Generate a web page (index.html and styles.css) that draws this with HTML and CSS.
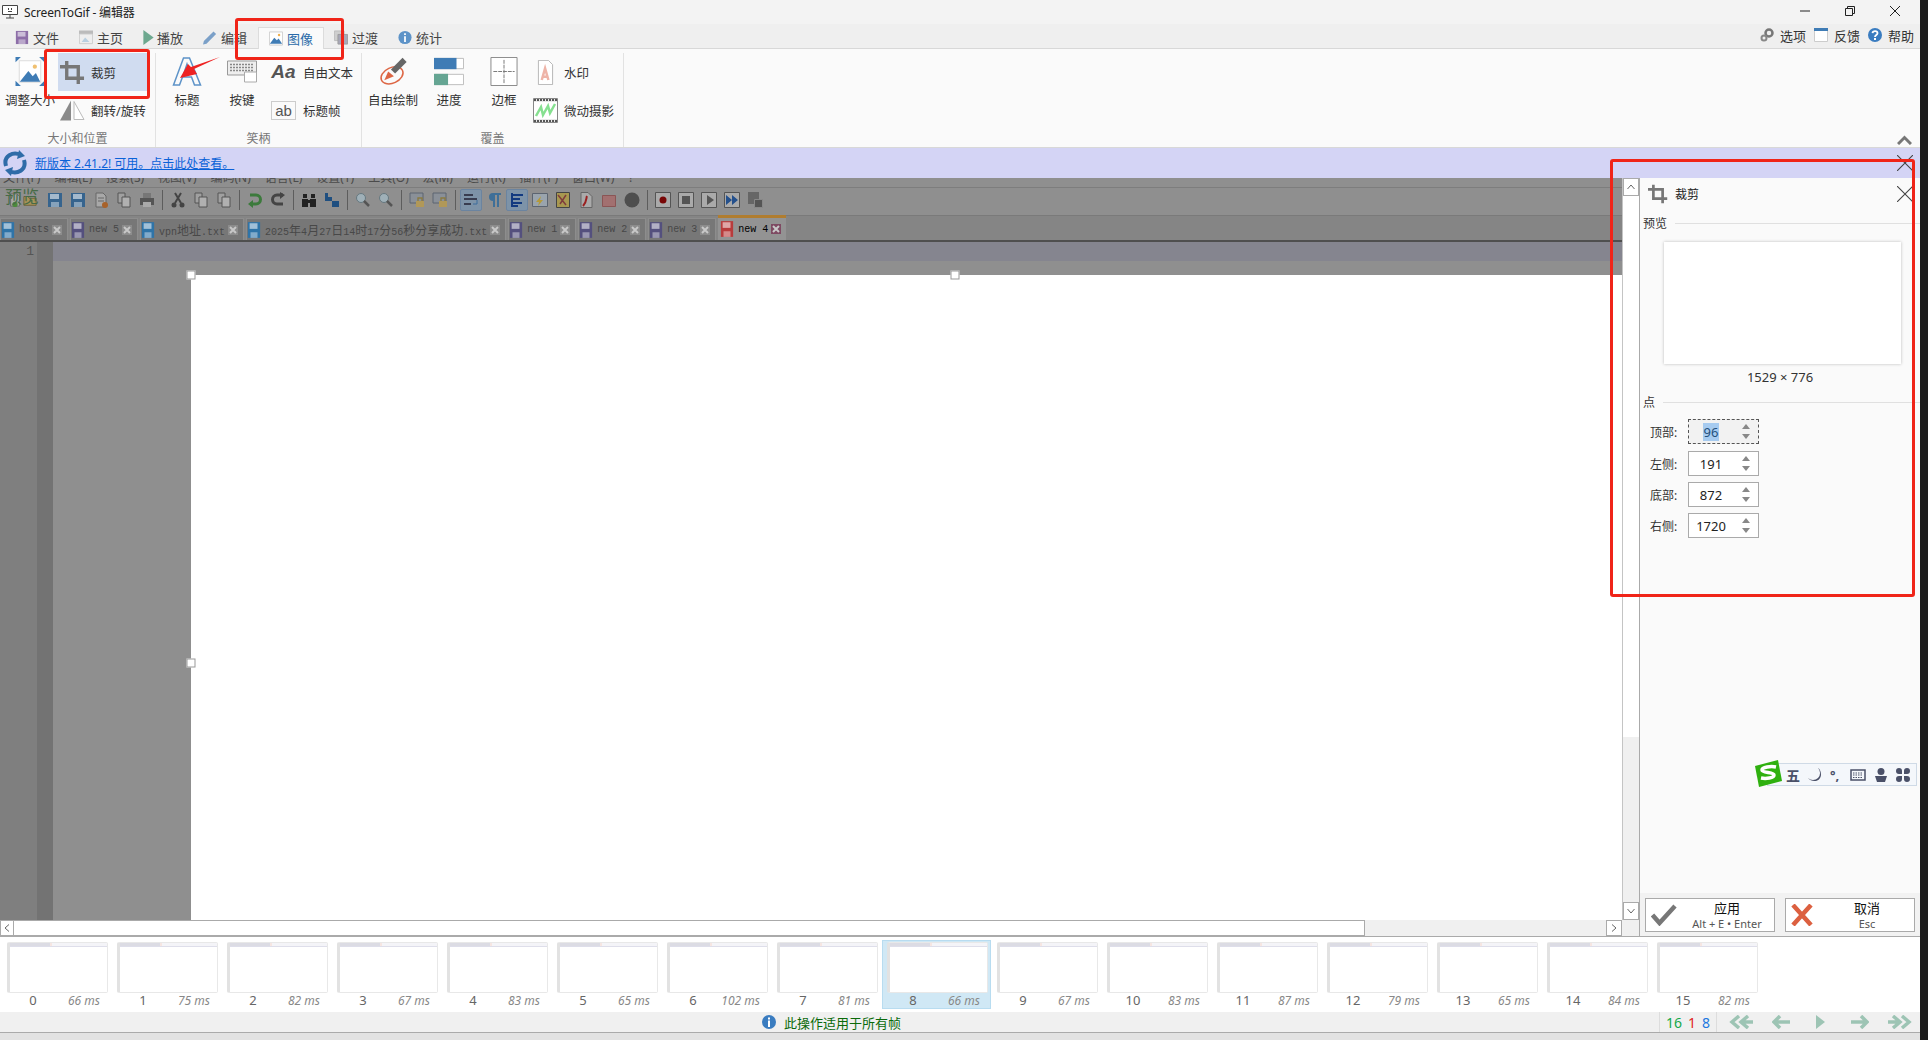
FILE: index.html
```html
<!DOCTYPE html>
<html lang="zh">
<head>
<meta charset="utf-8">
<title>ScreenToGif - 编辑器</title>
<link rel="stylesheet" href="styles.css">
</head>
<body>
<svg class="defs" aria-hidden="true">
  <symbol id="floppy" viewBox="0 0 16 16" preserveAspectRatio="none"><path fill="currentColor" d="M1 1h14v14H1z"/><path fill="#fff" opacity=".55" d="M3 2h9v5H3z"/><path fill="#fff" opacity=".4" d="M4 10h8v5H4z"/></symbol>
  <symbol id="crop" viewBox="0 0 26 26"><path fill="none" stroke="#777" stroke-width="3.500" d="M7 1v18h18M0 7h19v18"/></symbol>
  <symbol id="x" viewBox="0 0 16 16"><path fill="none" stroke="#444" stroke-width="1.100" d="M0 0l16 16M16 0L0 16"/></symbol>
  <symbol id="tabx" viewBox="0 0 10 10"><path fill="currentColor" d="M0 0h10v10H0z"/><path stroke="#c8c8c8" stroke-width="2" d="M2 2l6 6M8 2L2 8"/></symbol>
  <symbol id="picture" viewBox="0 0 16 16"><path fill="#fff" stroke="#ccc" d="M.5.5h15v15H.5z"/><circle cx="11.500" cy="4" r="1.400" fill="#f0b050"/><path fill="#3f7cb5" d="M1 14l5-7 3 3 2-2 4 6z"/></symbol>
  <symbol id="doc" viewBox="0 0 16 16"><path fill="#a8a8a8" stroke="#666" d="M3 1h7l3 3v11H3z"/><path stroke="#666" d="M5 6h6M5 9h6"/><circle cx="12" cy="13" r="3" fill="#a8622a"/></symbol>
  <symbol id="copydoc" viewBox="0 0 16 16"><path fill="#a0a0a0" stroke="#555" d="M2 1h7v10H2z"/><path fill="#b0b0b0" stroke="#555" d="M6 5h8v10H6z"/></symbol>
  <symbol id="lock" viewBox="0 0 16 16"><path fill="#8a9098" stroke="#5c6470" d="M1 1h13v10H1z"/><path fill="#b19858" d="M7 9h8v6H7z"/><path fill="none" stroke="#8a7a40" stroke-width="1.400" d="M9 9V6h4v3"/></symbol>
  <symbol id="lens" viewBox="0 0 16 16"><circle cx="6" cy="6" r="4.500" fill="#9fb0b8" stroke="#66787f"/><path stroke="#555" stroke-width="2.500" d="M9 9l5 5"/></symbol>
</svg>

<div class="app">
  <div class="window">
    <header class="titlebar">
      <svg class="title-icon" viewBox="0 0 16 14"><path fill="#fff" stroke="#444" d="M.5.5h15v9H.5z"/><path stroke="#444" d="M4 13h8M8 10v3"/><path fill="#444" d="M6 3h1v2H6zM9 3h1v2H9zM6 6h4v1H6z"/></svg>
      <span class="title-text">ScreenToGif - 编辑器</span>
      <div class="win-controls">
        <svg class="win-btn" viewBox="0 0 10 10"><path stroke="#222" d="M0 5h10"/></svg>
        <svg class="win-btn" viewBox="0 0 10 10"><path fill="none" stroke="#222" d="M.5 2.500h7v7h-7zM2.500 2.500V.5h7v7h-2"/></svg>
        <svg class="win-btn" viewBox="0 0 10 10"><path stroke="#222" d="M0 0l10 10M10 0L0 10"/></svg>
      </div>
    </header>

    <nav class="tabs">
      <div class="tab"><svg class="tab-icon floppy-purple"><use href="#floppy"/></svg>文件</div>
      <div class="tab"><svg class="tab-icon" viewBox="0 0 16 16"><path fill="#bbb" d="M0 0h16v4H0z"/><path fill="#eee" stroke="#ccc" d="M.5 4h15v11H.5z"/><path fill="#b9cfe0" d="M3 13l4-5 5 5z"/></svg>主页</div>
      <div class="tab tab-narrow"><svg class="tab-icon play-icon" viewBox="0 0 11 16"><path fill="#6da88f" d="M0 0l11 8-11 8z"/></svg>播放</div>
      <div class="tab"><svg class="tab-icon" viewBox="0 0 16 16"><path fill="#7ba0c8" d="M12 1l3 3L4 15l-4 1 1-4z"/></svg>编辑</div>
      <div class="tab tab-active"><svg class="tab-icon"><use href="#picture"/></svg>图像</div>
      <div class="tab"><svg class="tab-icon" viewBox="0 0 16 16"><path fill="#cfcfcf" stroke="#bbb" d="M.5.5h11v11H.5z"/><path fill="#a8a8b8" stroke="#999" d="M4.500 4.500h11v11h-11z"/></svg>过渡</div>
      <div class="tab"><svg class="tab-icon" viewBox="0 0 16 16"><circle cx="8" cy="8" r="7.500" fill="#5d93c8"/><path fill="#fff" d="M7 3h2v2H7zM7 6.500h2V13H7z"/></svg>统计</div>
      <div class="tab-extras">
        <svg class="extra-icon" viewBox="0 0 14 14"><circle cx="9" cy="5" r="3.500" fill="none" stroke="#777" stroke-width="2.500"/><circle cx="4" cy="10" r="2.500" fill="none" stroke="#888" stroke-width="2"/></svg>
        <span>选项</span>
        <svg class="extra-icon" viewBox="0 0 14 14"><path fill="#fff" stroke="#ccc" d="M.5.5h13v13H.5z"/><path fill="#3f7cb5" d="M0 0h14v3H0z"/></svg>
        <span>反馈</span>
        <svg class="extra-icon" viewBox="0 0 14 14"><circle cx="7" cy="7" r="7" fill="#3a7cc0"/><path fill="none" stroke="#fff" stroke-width="1.800" d="M4.500 5.200C4.800 2.500 9.500 2.500 9.500 5.200 9.500 7 7 7 7 9"/><path fill="#fff" d="M6 10h2v2H6z"/></svg>
        <span>帮助</span>
      </div>
    </nav>

    <section class="ribbon">
      <div class="group group-size">
        <div class="group-body">
          <div class="big big-first">
            <svg class="big-icon" viewBox="0 0 27 27"><path fill="#fff" stroke="#ddd" d="M3.500 3.500h20v20h-20z"/><circle cx="18" cy="9" r="2" fill="#f0c070"/><path fill="#3f7cb5" d="M4 23l8-10 4 5 3-3 4 8z"/><path fill="#3f7cb5" d="M0 0h5L0 5zM27 0v5l-5-5zM0 27v-5l5 5zM27 27h-5l5-5z"/></svg>
            <span>调整大小</span>
          </div>
          <div class="smalls smalls-size">
            <div class="small small-selected"><svg class="small-icon"><use href="#crop"/></svg><span>裁剪</span></div>
            <div class="small"><svg class="small-icon" viewBox="0 0 25 20"><path fill="#8a8a8a" d="M11 0v20H0z"/><path fill="#fff" stroke="#bbb" d="M14 1v18h10z"/></svg><span>翻转/旋转</span></div>
          </div>
        </div>
        <div class="group-title">大小和位置</div>
      </div>

      <div class="group group-art">
        <div class="group-body">
          <div class="big big-title">
            <svg class="big-icon" viewBox="0 0 29 29"><path fill="none" stroke="#5d93c8" stroke-width="1.500" d="M1 28L11 1h6l11 27h-6l-3-8H10l-3 8zM11.500 16h6L14.500 7z"/></svg>
            <span>标题</span>
          </div>
          <div class="big big-key">
            <svg class="big-icon" viewBox="0 0 30 24"><path fill="#eee" stroke="#999" d="M.5 1.500h29v14H.5z"/><path stroke="#888" stroke-width="1.500" stroke-dasharray="2 1" d="M3 5h24M3 8h24M3 11h24"/><path fill="#fff" stroke="#aaa" d="M17.500 12.500h12v10h-12z"/></svg>
            <span>按键</span>
          </div>
          <div class="smalls">
            <div class="small"><span class="aa-icon">Aa</span><span>自由文本</span></div>
            <div class="small"><span class="ab-icon">ab</span><span>标题帧</span></div>
          </div>
        </div>
        <div class="group-title">笑柄</div>
      </div>

      <div class="group group-overlay">
        <div class="group-body">
          <div class="big big-free">
            <svg class="big-icon" viewBox="0 0 30 30"><ellipse cx="14" cy="19" rx="12" ry="8" fill="none" stroke="#dd6644" stroke-width="1.500" transform="rotate(-25 14 19)"/><path stroke="#666" stroke-width="6" d="M15 15L27 3"/><path fill="#dd6644" d="M6 24l4-9 6 5z"/></svg>
            <span>自由绘制</span>
          </div>
          <div class="big big-mid">
            <svg class="big-icon" viewBox="0 0 32 29"><path fill="#fff" stroke="#bbb" d="M.500.500h31v11H.5zM.500 17.500h31v11H.5z"/><path fill="#3f7cb5" d="M0 0h24v12H0z"/><path fill="#65a593" d="M0 17h15v12H0z"/></svg>
            <span>进度</span>
          </div>
          <div class="big big-mid2">
            <svg class="big-icon" viewBox="0 0 28 30"><path fill="#fff" stroke="#888" d="M.500.500h27v29H.5z"/><path stroke="#777" stroke-dasharray="4 1" d="M14 3v24M3 15h22"/></svg>
            <span>边框</span>
          </div>
          <div class="smalls">
            <div class="small"><svg class="small-icon" viewBox="0 0 25 30"><path fill="#fff" stroke="#aaa" d="M4 .5h12l5 5v24H4z"/><path fill="none" stroke="#eeb4a8" stroke-width="3" d="M8 24l4-14 4 14M9 20h6"/></svg><span>水印</span></div>
            <div class="small"><svg class="small-icon" viewBox="0 0 25 25"><path fill="#e8e8e8" stroke="#888" d="M.5.5h24v24H.5z"/><path stroke="#555" stroke-width="2" stroke-dasharray="2 1" d="M1 2h23M1 23h23"/><path fill="#fff" d="M1 4h23v17H1z"/><path fill="none" stroke="#86e090" stroke-width="2.500" d="M3 18l5-9 2 8 5-9 2 7 5-9"/></svg><span>微动摄影</span></div>
          </div>
        </div>
        <div class="group-title">覆盖</div>
      </div>

      <svg class="collapse" viewBox="0 0 15 10"><path fill="none" stroke="#777" stroke-width="3" d="M1 9l6.500-6.500L14 9"/></svg>
    </section>

    <div class="notice">
      <svg class="notice-icon" viewBox="0 0 24 26"><path fill="none" stroke="#2f6ca8" stroke-width="4" d="M3 16C0 6 10 1 18 5M21 10c3 10-7 15-15 11"/><path fill="#2f6ca8" d="M16 0l6 6-8 3zM8 26l-6-6 8-3z"/></svg>
      <a class="notice-link" href="#">新版本 2.41.2! 可用。点击此处查看。</a>
      <svg class="notice-x"><use href="#x"/></svg>
    </div>

    <main class="work">
      <div class="stage">
        <div class="stage-top">
          <div class="editor">
            <div class="menu">
              <span>文件(F)</span><span>编辑(E)</span><span>搜索(S)</span><span>视图(V)</span><span>编码(N)</span><span>语言(L)</span><span>设置(T)</span><span>工具(O)</span><span>宏(M)</span><span>运行(R)</span><span>插件(P)</span><span>窗口(W)</span><span>?</span>
            </div>
            <div class="toolbar">
              <svg class="tool tool-new" viewBox="0 0 16 16"><path fill="#a8a8a8" stroke="#666" d="M3 1h7l3 3v11H3z"/><circle cx="8" cy="13" r="3" fill="#4c8a3c"/></svg>
              <svg class="tool tool-open" viewBox="0 0 16 16"><path fill="#a8945a" stroke="#6c5c30" d="M1 4h5l1 2h8v8H1z"/></svg>
              <svg class="tool tool-blue"><use href="#floppy"/></svg>
              <svg class="tool tool-blue"><use href="#floppy"/></svg>
              <svg class="tool"><use href="#doc"/></svg>
              <svg class="tool"><use href="#copydoc"/></svg>
              <svg class="tool" viewBox="0 0 16 16"><path fill="#777" d="M4 1h8v5H4z"/><path fill="#555" d="M1 6h14v7H1z"/><path fill="#aaa" d="M4 10h8v5H4z"/></svg>
              <i class="tool-sep"></i>
              <svg class="tool" viewBox="0 0 16 16"><path stroke="#444" stroke-width="2" d="M5 1l6 10M11 1L5 11"/><circle cx="4" cy="13" r="2.500" fill="#444"/><circle cx="12" cy="13" r="2.500" fill="#444"/></svg>
              <svg class="tool"><use href="#copydoc"/></svg>
              <svg class="tool"><use href="#copydoc"/></svg>
              <i class="tool-sep"></i>
              <svg class="tool" viewBox="0 0 16 16"><path fill="none" stroke="#3c7a3c" stroke-width="3" d="M3 3h6a4.500 4.500 0 010 9H3"/><path fill="#3c7a3c" d="M1 12l5-4v8z"/></svg>
              <svg class="tool" viewBox="0 0 16 16"><path fill="none" stroke="#444" stroke-width="3" d="M13 3H7a4.500 4.500 0 000 9h6"/><path fill="#444" d="M15 3l-5-3v7z"/></svg>
              <i class="tool-sep"></i>
              <svg class="tool" viewBox="0 0 16 16"><path fill="#222" d="M2 2h4v4H2zM10 2h4v4h-4zM1 7h6v8H1zM9 7h6v8H9zM6 8h4v3H6z"/></svg>
              <svg class="tool" viewBox="0 0 16 16"><path fill="#1f4f80" d="M1 1h3v8H1zM4 5h4v4H4zM8 9h7v6H8z"/></svg>
              <i class="tool-sep"></i>
              <svg class="tool"><use href="#lens"/></svg>
              <svg class="tool"><use href="#lens"/></svg>
              <i class="tool-sep"></i>
              <svg class="tool"><use href="#lock"/></svg>
              <svg class="tool"><use href="#lock"/></svg>
              <i class="tool-sep"></i>
              <span class="tool-on"><svg class="tool-inner" viewBox="0 0 16 16"><path stroke="#223" stroke-width="1.500" d="M1 3h9M1 7h13M1 12h7"/><path fill="none" stroke="#3c6c9c" d="M14 8v4h-4"/></svg></span>
              <svg class="tool" viewBox="0 0 16 16"><path fill="#3f6f98" d="M6 1h9v2h-2v12h-2V3H9v12H7V9a4 4 0 010-8z"/></svg>
              <span class="tool-on"><svg class="tool-inner" viewBox="0 0 16 16"><path stroke="#123a80" stroke-width="2" d="M3 1v14M3 3h11M3 7h8M3 11h10M3 14h6"/></svg></span>
              <svg class="tool" viewBox="0 0 16 16"><path fill="#9aa4ad" stroke="#5c6470" d="M.5 1.500h15v13H.5z"/><path fill="#b49a3a" d="M9 4l-5 6h3l-1 4 5-6H8z"/></svg>
              <svg class="tool" viewBox="0 0 16 16"><path fill="#a89850" stroke="#444" d="M1.500.5h13v15h-13z"/><path fill="none" stroke="#7f3c3c" stroke-width="1.500" d="M3 3l8 10M11 3l-6 9"/></svg>
              <svg class="tool" viewBox="0 0 16 16"><path fill="#aaa" stroke="#666" d="M3 .5h7l4 4v11H3z"/><path fill="none" stroke="#9a2020" stroke-width="2" d="M5 14c4-4 3-8 4-10"/></svg>
              <svg class="tool" viewBox="0 0 16 16"><path fill="#a27070" stroke="#8a5555" d="M1.500 3.500h13v11h-13z"/></svg>
              <svg class="tool" viewBox="0 0 16 16"><circle cx="8" cy="8" r="7.500" fill="#4e4e4e"/></svg>
              <i class="tool-sep"></i>
              <svg class="tool" viewBox="0 0 16 16"><path fill="#aaa" stroke="#555" d="M.5.5h15v15H.5z"/><circle cx="8" cy="8" r="3.500" fill="#780606"/></svg>
              <svg class="tool" viewBox="0 0 16 16"><path fill="#aaa" stroke="#555" d="M.5.5h15v15H.5z"/><path fill="#555" d="M4 4h8v8H4z"/></svg>
              <svg class="tool" viewBox="0 0 16 16"><path fill="#aaa" stroke="#555" d="M.5.5h15v15H.5z"/><path fill="#555" d="M6 3l7 5-7 5z"/></svg>
              <svg class="tool" viewBox="0 0 16 16"><path fill="#aaa" stroke="#555" d="M.5.5h15v15H.5z"/><path fill="#24508c" d="M2 3l6 5-6 5zM8 3l6 5-6 5z"/></svg>
              <svg class="tool" viewBox="0 0 16 16"><path fill="#666" d="M1 0h11v12H1z"/><path fill="#555" stroke="#888" d="M7.500 7.500h8v8h-8z"/></svg>
              <span class="preview-word">预览</span>
            </div>
            <div class="doc-tabs">
              <div class="doc-tab"><svg class="doc-icon doc-blue"><use href="#floppy"/></svg><span class="doc-name">hosts</span><svg class="doc-x"><use href="#tabx"/></svg></div>
              <div class="doc-tab"><svg class="doc-icon doc-purple"><use href="#floppy"/></svg><span class="doc-name">new 5</span><svg class="doc-x"><use href="#tabx"/></svg></div>
              <div class="doc-tab"><svg class="doc-icon doc-blue"><use href="#floppy"/></svg><span class="doc-name">vpn<b>地址</b>.txt</span><svg class="doc-x"><use href="#tabx"/></svg></div>
              <div class="doc-tab"><svg class="doc-icon doc-blue"><use href="#floppy"/></svg><span class="doc-name">2025<b>年</b>4<b>月</b>27<b>日</b>14<b>时</b>17<b>分</b>56<b>秒分享成功</b>.txt</span><svg class="doc-x"><use href="#tabx"/></svg></div>
              <div class="doc-tab"><svg class="doc-icon doc-purple"><use href="#floppy"/></svg><span class="doc-name">new 1</span><svg class="doc-x"><use href="#tabx"/></svg></div>
              <div class="doc-tab"><svg class="doc-icon doc-purple"><use href="#floppy"/></svg><span class="doc-name">new 2</span><svg class="doc-x"><use href="#tabx"/></svg></div>
              <div class="doc-tab"><svg class="doc-icon doc-purple"><use href="#floppy"/></svg><span class="doc-name">new 3</span><svg class="doc-x"><use href="#tabx"/></svg></div>
              <div class="doc-tab doc-tab-active"><svg class="doc-icon doc-red"><use href="#floppy"/></svg><span class="doc-name">new 4</span><svg class="doc-x doc-x-red"><use href="#tabx"/></svg></div>
            </div>
            <div class="edit-area">
              <div class="line-nums">1</div>
              <div class="fold"></div>
              <div class="edit-text">
                <div class="cur-line"></div>
                <div class="crop-row">
                  <div class="crop-area">
                    <i class="handle handle-tl"></i>
                    <i class="handle handle-tc"></i>
                    <i class="handle handle-ml"></i>
                  </div>
                </div>
              </div>
            </div>
          </div>
          <div class="vscroll">
            <div class="sbtn sbtn-v"><svg class="chev" viewBox="0 0 8 6"><path fill="none" stroke="#666" d="M.5 5L4 1l3.500 4"/></svg></div>
            <div class="vthumb"></div>
            <div class="sbtn sbtn-v"><svg class="chev" viewBox="0 0 8 6"><path fill="none" stroke="#666" d="M.5 1L4 5l3.500-4"/></svg></div>
          </div>
        </div>
        <div class="hscroll">
          <div class="sbtn sbtn-h"><svg class="chev-h" viewBox="0 0 6 8"><path fill="none" stroke="#666" d="M5 .5L1 4l4 3.500"/></svg></div>
          <div class="hthumb"></div>
          <div class="sbtn sbtn-h sbtn-right"><svg class="chev-h" viewBox="0 0 6 8"><path fill="none" stroke="#666" d="M1 .5L5 4 1 7.500"/></svg></div>
        </div>
      </div>

      <aside class="panel">
        <div class="panel-head">
          <svg class="panel-crop"><use href="#crop"/></svg>
          <span>裁剪</span>
          <svg class="panel-x"><use href="#x"/></svg>
        </div>
        <div class="legend legend-first"><span>预览</span><i></i></div>
        <div class="preview-box"></div>
        <div class="preview-size">1529 × 776</div>
        <div class="legend"><span>点</span><i></i></div>
        <div class="fields">
          <div class="field"><label>顶部:</label><div class="spin spin-focus"><span class="spin-val"><em>96</em></span><span class="spin-arrows"><i class="up"></i><i class="down"></i></span></div></div>
          <div class="field"><label>左侧:</label><div class="spin"><span class="spin-val">191</span><span class="spin-arrows"><i class="up"></i><i class="down"></i></span></div></div>
          <div class="field"><label>底部:</label><div class="spin"><span class="spin-val">872</span><span class="spin-arrows"><i class="up"></i><i class="down"></i></span></div></div>
          <div class="field"><label>右侧:</label><div class="spin"><span class="spin-val">1720</span><span class="spin-arrows"><i class="up"></i><i class="down"></i></span></div></div>
        </div>
        <div class="panel-actions">
          <div class="action">
            <svg class="action-icon" viewBox="0 0 26 22"><path fill="none" stroke="#777" stroke-width="4.500" d="M1.500 11l7 8L24 2"/></svg>
            <div class="action-text"><strong>应用</strong><small>Alt + E • Enter</small></div>
          </div>
          <div class="action">
            <svg class="action-icon" viewBox="0 0 26 22"><path stroke="#dc6040" stroke-width="4.500" d="M2 1l18 20M20 1L2 21"/></svg>
            <div class="action-text"><strong>取消</strong><small>Esc</small></div>
          </div>
        </div>
        <div class="ime">
          <svg class="ime-logo" viewBox="0 0 28 27"><path fill="#2fb00f" d="M1 6L24 0l4 21-23 6z"/><path fill="none" stroke="#fff" stroke-width="3.500" d="M22 7c-5-1-14 0-14 3s12 2 12 5-8 4-13 3"/></svg>
          <div class="ime-bar">
            <span class="ime-five">五</span>
            <svg class="ime-glyph" viewBox="0 0 14 14"><path fill="#4a5068" d="M10 0a7 7 0 01-10 10c3 4 12 5 13-3 0-3-1-6-3-7z"/></svg>
            <span class="ime-punct">°,</span>
            <svg class="ime-key" viewBox="0 0 16 12"><path fill="none" stroke="#4a5068" stroke-width="1.500" d="M1 1h14v10H1z"/><path stroke="#4a5068" stroke-dasharray="1.500 1" d="M3 4h10M3 6h10M3 8.500h10"/></svg>
            <svg class="ime-glyph" viewBox="0 0 14 14"><circle cx="7" cy="3.500" r="3.500" fill="#4a5068"/><path fill="#4a5068" d="M1 8h12l-2 6H3z"/></svg>
            <svg class="ime-glyph" viewBox="0 0 14 14"><path fill="#4a5068" d="M3 0a3 3 0 013 3v3H3a3 3 0 010-6zM11 0a3 3 0 010 6H8V3a3 3 0 013-3zM3 8h3v3a3 3 0 11-3-3zM8 8h3a3 3 0 11-3 3z"/></svg>
          </div>
        </div>
      </aside>
    </main>

    <section class="frames">
      <div class="frame"><div class="thumb"></div><div class="frame-meta"><span class="idx">0</span><span class="dur">66 ms</span></div></div>
      <div class="frame"><div class="thumb"></div><div class="frame-meta"><span class="idx">1</span><span class="dur">75 ms</span></div></div>
      <div class="frame"><div class="thumb"></div><div class="frame-meta"><span class="idx">2</span><span class="dur">82 ms</span></div></div>
      <div class="frame"><div class="thumb"></div><div class="frame-meta"><span class="idx">3</span><span class="dur">67 ms</span></div></div>
      <div class="frame"><div class="thumb"></div><div class="frame-meta"><span class="idx">4</span><span class="dur">83 ms</span></div></div>
      <div class="frame"><div class="thumb"></div><div class="frame-meta"><span class="idx">5</span><span class="dur">65 ms</span></div></div>
      <div class="frame"><div class="thumb"></div><div class="frame-meta"><span class="idx">6</span><span class="dur">102 ms</span></div></div>
      <div class="frame"><div class="thumb"></div><div class="frame-meta"><span class="idx">7</span><span class="dur">81 ms</span></div></div>
      <div class="frame frame-selected"><div class="thumb"></div><div class="frame-meta"><span class="idx">8</span><span class="dur">66 ms</span></div></div>
      <div class="frame"><div class="thumb"></div><div class="frame-meta"><span class="idx">9</span><span class="dur">67 ms</span></div></div>
      <div class="frame"><div class="thumb"></div><div class="frame-meta"><span class="idx">10</span><span class="dur">83 ms</span></div></div>
      <div class="frame"><div class="thumb"></div><div class="frame-meta"><span class="idx">11</span><span class="dur">87 ms</span></div></div>
      <div class="frame"><div class="thumb"></div><div class="frame-meta"><span class="idx">12</span><span class="dur">79 ms</span></div></div>
      <div class="frame"><div class="thumb"></div><div class="frame-meta"><span class="idx">13</span><span class="dur">65 ms</span></div></div>
      <div class="frame"><div class="thumb"></div><div class="frame-meta"><span class="idx">14</span><span class="dur">84 ms</span></div></div>
      <div class="frame"><div class="thumb"></div><div class="frame-meta"><span class="idx">15</span><span class="dur">82 ms</span></div></div>
    </section>

    <footer class="status">
      <div class="status-msg">
        <svg class="status-info" viewBox="0 0 14 14"><circle cx="7" cy="7" r="7" fill="#3a7cc0"/><path fill="#fff" d="M6 2.500h2v2H6zM6 5.500h2V12H6z"/></svg>
        <span>此操作适用于所有帧</span>
      </div>
      <div class="counts"><b class="c-green">16</b><b class="c-red">1</b><b class="c-blue">8</b></div>
      <div class="nav-arrows">
        <svg class="nav-a nav-wide" viewBox="0 0 24 14"><path fill="none" stroke="#9dc4b4" stroke-width="3.500" d="M10 1L3 7l7 6M19 1l-7 6 7 6M13 7h11"/></svg>
        <svg class="nav-a" viewBox="0 0 18 14"><path fill="none" stroke="#9dc4b4" stroke-width="3.500" d="M8 1L2 7l6 6M2 7h16"/></svg>
        <svg class="nav-a nav-play" viewBox="0 0 9 14"><path fill="#9dc4b4" d="M0 0l9 7-9 7z"/></svg>
        <svg class="nav-a" viewBox="0 0 18 14"><path fill="none" stroke="#9dc4b4" stroke-width="3.500" d="M10 1l6 6-6 6M0 7h16"/></svg>
        <svg class="nav-a nav-wide" viewBox="0 0 24 14"><path fill="none" stroke="#9dc4b4" stroke-width="3.500" d="M14 1l7 6-7 6M5 1l7 6-7 6M0 7h11"/></svg>
      </div>
    </footer>
    <div class="taskstrip"></div>
  </div>
  <div class="edge"></div>
</div>

<div class="red-box red-tab"></div>
<div class="red-box red-crop"></div>
<div class="red-box red-panel"></div>
<svg class="red-arrow" viewBox="0 0 40 21"><path fill="#ee2222" d="M40 0L14 12l3 5L0 21l8-14 3 3z"/></svg>
</body>
</html>
```

FILE: styles.css
```css
* { box-sizing: border-box; }
html, body { margin: 0; height: 100%; }
body {
  width: 1928px;
  height: 1040px;
  overflow: hidden;
  position: relative;
  font-family: "Noto Sans", "Noto Sans CJK SC", sans-serif;
  font-size: 12px;
  color: #333;
  background: #1a1a1a;
}
.defs { display: none; }
.app { display: flex; height: 1040px; }
.window { width: 1920px; display: flex; flex-direction: column; background: #f0f0f0; }
.edge { width: 8px; background: #1c1c1c; }

/* title bar */
.titlebar { height: 24px; flex: none; display: flex; align-items: center; background: #f3f3f3; padding-left: 2px; }
.title-icon { width: 16px; height: 14px; margin-right: 6px; }
.title-text { font-size: 12px; letter-spacing: -.15px; color: #222; }
.win-controls { margin-left: auto; display: flex; gap: 35px; padding: 0 20px 2px 0; }
.win-btn { width: 10px; height: 10px; display: block; }

/* tabs */
.tabs { height: 25px; flex: none; display: flex; align-items: flex-end; padding-left: 5px; background: #efefef; border-bottom: 1px solid #d8d8d8; }
.tab { height: 21px; padding: 0 10px; display: flex; align-items: center; gap: 4px; font-size: 13px; color: #444; }
.tab-icon { width: 14px; height: 15px; flex: none; }
.floppy-purple { color: #8d6ea8; }
.tab-narrow { gap: 3px; }
.play-icon { width: 11px; }
.tab-active { background: #fafafa; border: 1px solid #dcdcdc; border-bottom: 0; color: #2a6aa8; margin-bottom: -1px; margin-left: 1px; height: 22px; padding: 0 10px; }
.tab-extras { margin-left: auto; display: flex; align-items: center; height: 26px; padding-right: 6px; font-size: 13px; color: #333; }
.tab-extras span { margin-left: 6px; margin-right: 8px; }
.tab-extras span:last-child { margin-right: 0; }
.extra-icon { width: 14px; height: 14px; }

/* ribbon */
.ribbon { height: 99px; flex: none; display: flex; position: relative; background: #fafafa; border-bottom: 1px solid #d8d8d8; padding-top: 4px; }
.group { display: flex; flex-direction: column; border-right: 1px solid #e2e2e2; }
.group-size { width: 156px; }
.group-art { width: 206px; }
.group-overlay { width: 262px; }
.group-body { flex: 1; display: flex; min-height: 0; }
.group-title { height: 17px; text-align: center; font-size: 12px; line-height: 18px; color: #777; }
.big { width: 50px; display: flex; flex-direction: column; align-items: center; padding-top: 4px; font-size: 12.5px; color: #333; white-space: nowrap; }
.big span { margin-top: 7px; height: 16px; line-height: 16px; }
.big-icon { width: 30px; height: 29px; flex: none; }
.big-first { margin-left: 5px; }
.big-title { margin-left: 6px; }
.big-key { margin-left: 5px; }
.big-free { margin-left: 6px; }
.big-mid { margin-left: 6px; }
.big-mid2 { margin-left: 5px; }
.smalls { display: flex; flex-direction: column; margin-left: 4px; }
.smalls-size { margin-left: 3px; width: 89px; }
.small { height: 38px; display: flex; align-items: center; gap: 6px; font-size: 12.5px; color: #333; white-space: nowrap; }
.smalls-size .small { padding-left: 2px; }
.small-selected { background: #d0dcf0; }
.small-icon { width: 25px; height: 25px; flex: none; }
.aa-icon { width: 25px; font: italic bold 19px "Liberation Sans", sans-serif; color: #555; text-align: center; margin-right: 1px; }
.ab-icon { width: 25px; height: 19px; border: 1px solid #ccc; font: 15px/17px "Liberation Sans", sans-serif; color: #555; text-align: center; margin-right: 1px; }
.collapse { position: absolute; right: 8px; bottom: 2px; width: 15px; height: 10px; }

/* notice */
.notice { height: 30px; flex: none; display: flex; align-items: center; background: #d4d4f5; padding-left: 3px; }
.notice-icon { width: 24px; height: 26px; }
.notice-link { margin-left: 8px; font-size: 12px; color: #0a62d8; text-decoration: underline; }
.notice-x { width: 16px; height: 16px; margin-left: auto; margin-right: 7px; }

/* work area */
.work { height: 759px; flex: none; display: flex; position: relative; border-bottom: 1px solid #aaa; background: #fff; }
.stage { width: 1639px; flex: none; display: flex; flex-direction: column; }
.stage-top { height: 742px; flex: none; display: flex; }
.editor { flex: 1; display: flex; flex-direction: column; min-width: 0; background: #8f8f8f; }
.menu { height: 9px; flex: none; overflow: hidden; display: flex; align-items: flex-end; gap: 14px; padding-left: 3px; font-size: 12px; line-height: 16px; color: #4b4b4b; }
.menu span { display: block; flex: none; height: 16px; margin-bottom: 1px; white-space: nowrap; }
.toolbar { height: 28px; flex: none; display: flex; align-items: center; gap: 7px; border-top: 1px solid #7d7d7d; padding: 0 0 4px 8px; position: relative; }
.preview-word { position: absolute; left: 5px; top: -1px; font-size: 17px; line-height: 20px; color: #476b47; }
.tool { width: 16px; height: 16px; flex: none; }
.tool-new { width: 14px; height: 16px; }
.tool-open { width: 14px; height: 16px; margin-left: -6px; margin-right: 3px; }
.tool-blue { color: #36648e; }
.tool-sep { width: 1px; height: 20px; background: #5d5d5d; flex: none; }
.tool-on { width: 22px; height: 22px; flex: none; margin: 0 -3px; display: flex; align-items: center; justify-content: center; background: #7d93a8; border: 1px solid #6b84a0; border-radius: 2px; }
.tool-inner { width: 16px; height: 16px; }
.doc-tabs { height: 27px; flex: none; display: flex; align-items: flex-end; gap: 2px; background: #858585; border-top: 1px solid #7a7a7a; border-bottom: 2px solid #4f4f4f; }
.doc-tab { height: 22px; display: flex; align-items: center; padding: 0 5px 0 0; background: #777; border: 1px solid #8d8d8d; border-bottom: 0; font: 10px "Liberation Mono", "Noto Sans CJK SC", monospace; color: #484848; white-space: nowrap; gap: 4px; }
.doc-tab b { font-weight: 400; font-size: 12px; font-family: "Noto Sans CJK SC", sans-serif; }
.doc-icon { width: 14px; height: 18px; flex: none; }
.doc-blue { color: #2f74a8; }
.doc-purple { color: #54507e; }
.doc-red { color: #b83c3c; }
.doc-x { width: 10px; height: 10px; color: #8c8c8c; flex: none; margin-left: -1px; }
.doc-x-red { color: #7e4a62; }
.doc-tab-active { height: 25px; background: #939393; color: #000; border: 0; border-top: 3px solid #b07d30; padding-left: 2px; }
.edit-area { flex: 1; display: flex; min-height: 0; }
.line-nums { width: 37px; flex: none; background: #7f7f7f; color: #555; font: 13px/19px "Liberation Mono", monospace; text-align: right; padding-right: 3px; }
.fold { width: 16px; flex: none; background: #737373; }
.edit-text { flex: 1; display: flex; flex-direction: column; min-width: 0; }
.cur-line { height: 19px; flex: none; background: #85858f; }
.crop-row { flex: 1; padding: 14px 0 0 138px; display: flex; }
.crop-area { flex: 1; background: #fff; position: relative; }
.handle { position: absolute; width: 9px; height: 9px; background: #fff; border: 1px solid #999; transform: translate(-50%, -50%); }
.handle-tl { left: 0; top: 0; }
.handle-tc { left: 764px; top: 0; }
.handle-ml { left: 0; top: 388px; }

/* scrollbars */
.vscroll { width: 17px; flex: none; display: flex; flex-direction: column; background: #f0f0f0; border-left: 1px solid #c4c4c4; }
.sbtn { display: flex; align-items: center; justify-content: center; background: #fff; border: 1px solid #aaa; flex: none; }
.sbtn-v { height: 18px; width: 16px; }
.chev { width: 8px; height: 6px; }
.chev-h { width: 6px; height: 8px; }
.vthumb { height: 541px; width: 16px; background: #fff; flex: none; margin-bottom: auto; }
.hscroll { height: 17px; flex: none; display: flex; background: #f0f0f0; border-bottom: 1px solid #aaa; }
.sbtn-h { width: 14px; height: 16px; border-width: 1px; }
.sbtn-right { margin-left: auto; margin-right: 17px; width: 16px; }
.hthumb { width: 1351px; background: #fff; border: 1px solid #aaa; border-left: 0; flex: none; }

/* side panel */
.panel { width: 281px; flex: none; display: flex; flex-direction: column; position: relative; background: #fafafa; border-left: 1px solid #aaa; }
.panel-head { height: 32px; flex: none; display: flex; align-items: center; padding-left: 8px; gap: 7px; font-size: 12px; color: #222; }
.panel-crop { width: 20px; height: 20px; }
.panel-x { width: 16px; height: 16px; margin-left: auto; margin-right: 7px; }
.legend { height: 24px; flex: none; display: flex; align-items: center; padding-left: 3px; gap: 8px; font-size: 12px; color: #333; }
.legend-first { height: 26px; }
.legend i { flex: 1; height: 1px; background: #e0e0e0; }
.preview-box { margin: 6px 19px 0 24px; height: 122px; flex: none; background: #fff; box-shadow: 0 0 3px #bbb; }
.preview-size { height: 26px; flex: none; text-align: center; line-height: 26px; font-size: 13px; color: #333; }
.fields { display: flex; flex-direction: column; gap: 6px; padding: 6px 0 0 10px; }
.field { display: flex; align-items: center; height: 25px; font-size: 12px; color: #333; }
.field:first-child { margin: -1px 0 1px; }
.field label { width: 38px; }
.spin { width: 71px; height: 25px; display: flex; align-items: center; background: #fff; border: 1px solid #aaa; color: #222; font-size: 13px; }
.spin-focus { border: 1px dashed #555; background: #f2f2f2; }
.spin-focus em { font-style: normal; background: #a6cbf0; color: #24507c; padding: 0 1px; }
.spin-val { width: 44px; text-align: center; }
.spin-arrows { width: 25px; display: flex; flex-direction: column; align-items: center; gap: 5px; }
.spin-arrows i { width: 0; height: 0; border-left: 4px solid transparent; border-right: 4px solid transparent; }
.up { border-bottom: 5px solid #888; }
.down { border-top: 5px solid #888; }
.panel-actions { margin-top: auto; height: 43px; flex: none; display: flex; gap: 10px; padding: 5px 5px 4px; background: #f2f2f2; }
.action { width: 130px; height: 34px; display: flex; align-items: center; padding-left: 5px; background: #fff; border: 1px solid #aaa; }
.action-icon { width: 26px; height: 22px; flex: none; }
.action-text { flex: 1; display: flex; flex-direction: column; align-items: center; padding-left: 3px; }
.action-text strong { font-weight: 400; font-size: 13px; line-height: 17px; color: #111; }
.action-text small { font-size: 11px; line-height: 13px; color: #555; }
.ime { position: absolute; right: 3px; top: 582px; width: 163px; height: 27px; }
.ime-logo { position: absolute; left: 0; top: 0; width: 28px; height: 27px; z-index: 1; }
.ime-bar { position: absolute; left: 13px; right: 0; top: 3px; height: 23px; display: flex; align-items: center; gap: 8px; padding-left: 18px; background: #f4f7fb; border: 1px solid #cfdae6; color: #4a5068; }
.ime-five { font-size: 14px; font-weight: 700; }
.ime-glyph { width: 14px; height: 14px; }
.ime-punct { font-size: 13px; font-weight: 700; width: 12px; }
.ime-key { width: 16px; height: 12px; }

/* frames */
.frames { height: 75px; flex: none; display: flex; gap: 1px; padding: 3px 0 0 2px; background: #fff; }
.frame { width: 109px; height: 69px; padding: 1px 0 0 4px; border: 1px solid transparent; flex: none; }
.frame-selected { background: #d0e8f5; border-color: #b8dcf0; }
.thumb { width: 101px; height: 51px; background: #fff; border: 1px solid #e8e8e8; border-left: 3px solid #e2e2e2; border-radius: 2px; }
.thumb::before { content: ""; display: block; height: 3px; background: linear-gradient(90deg, #dcdce4 0 40px, #f6e6e2 40px 42px, #f4f4f8 42px); border-bottom: 1px solid #dedeea; }
.frame-meta { display: flex; align-items: center; height: 14px; font-size: 13px; color: #666; }
.idx { width: 52px; text-align: center; }
.dur { margin-left: auto; padding-right: 10px; font-style: italic; font-size: 12px; color: #888; }

/* status */
.status { height: 20px; flex: none; display: flex; align-items: center; background: #f0f0f0; }
.status-msg { display: flex; align-items: center; gap: 8px; margin-left: 762px; font-size: 13px; color: #0a6a0a; }
.status-info { width: 14px; height: 14px; }
.counts { margin-left: auto; display: flex; gap: 6px; height: 20px; align-items: center; padding: 0 6px; border-left: 1px solid #ddd; border-right: 1px solid #ddd; font-size: 14px; }
.counts b { font-weight: 400; }
.c-green { color: #12a84a; }
.c-red { color: #e02424; }
.c-blue { color: #2078e0; }
.nav-arrows { display: flex; align-items: center; gap: 19px; padding: 0 8px 0 12px; }
.nav-a { width: 18px; height: 14px; }
.nav-wide { width: 24px; }
.nav-play { width: 9px; margin: 0 7px; }
.taskstrip { flex: 1; background: #e2e2e2; border-top: 1px solid #aaa; }

/* annotations on top of the screenshot */
.red-box { position: absolute; border: 3px solid #f02418; border-radius: 3px; }
.red-tab { left: 235px; top: 18px; width: 109px; height: 42px; }
.red-crop { left: 44px; top: 49px; width: 106px; height: 50px; }
.red-panel { left: 1610px; top: 159px; width: 305px; height: 438px; }
.red-arrow { position: absolute; left: 180px; top: 57px; width: 40px; height: 21px; }
```
